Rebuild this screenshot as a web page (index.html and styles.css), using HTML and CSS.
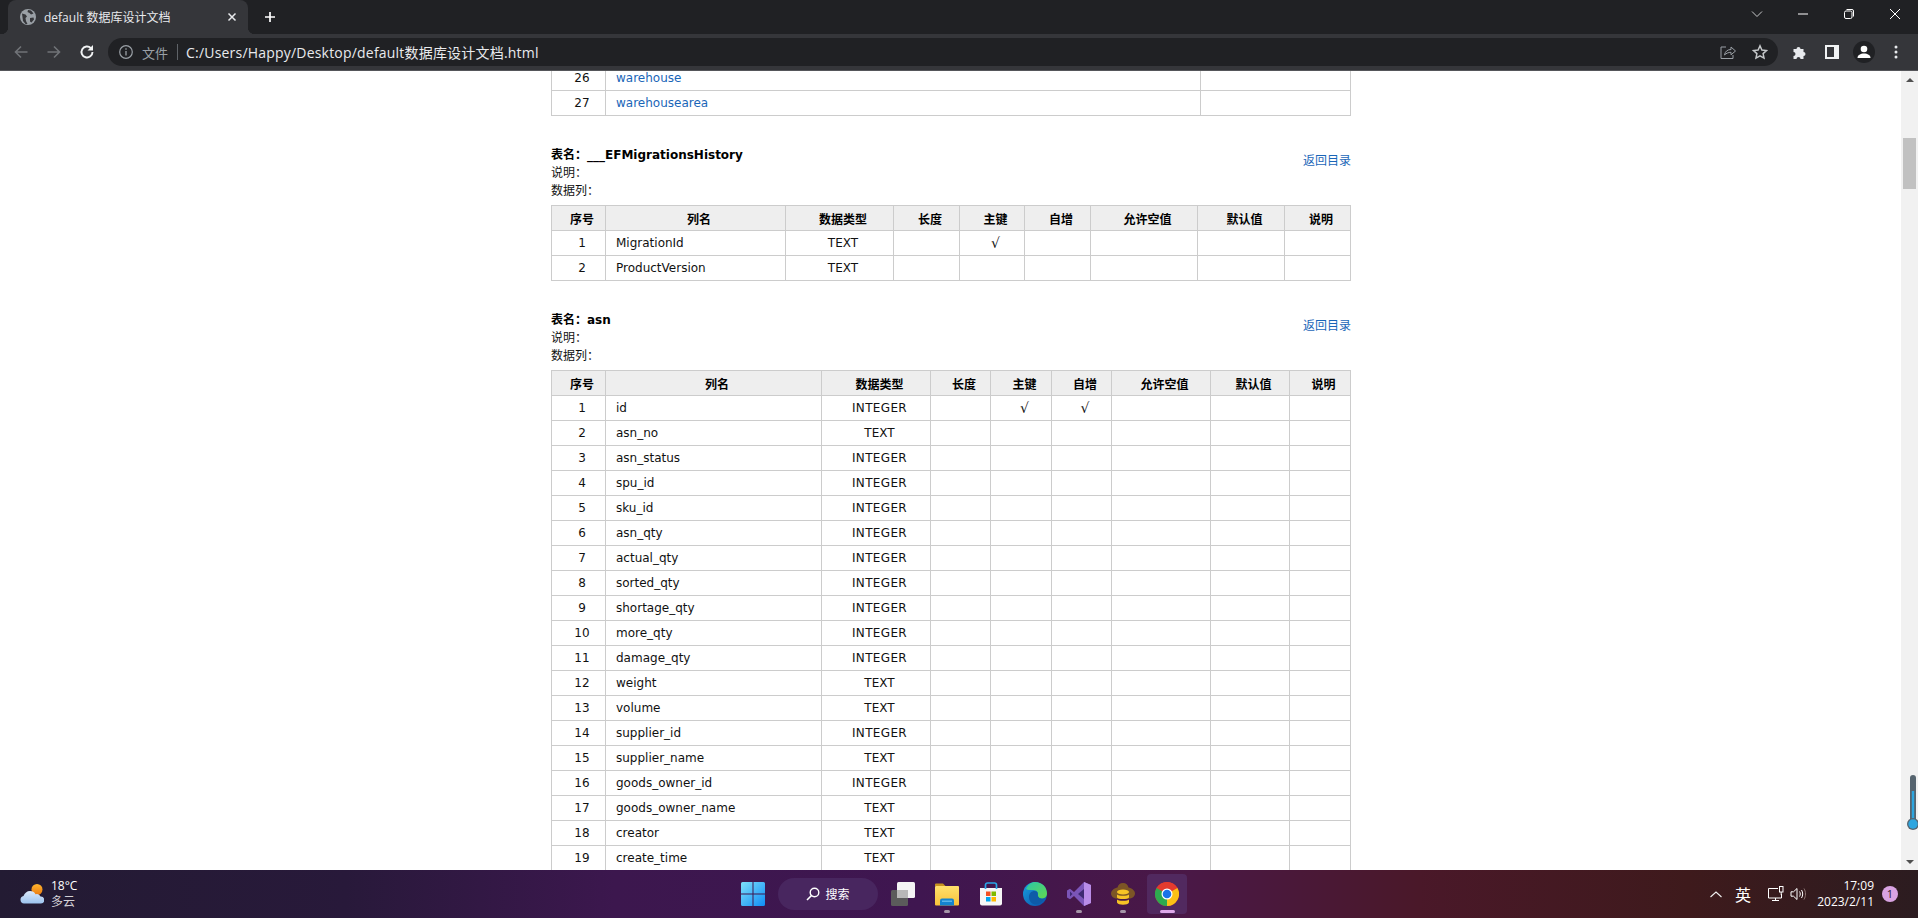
FILE: index.html
```html
<!DOCTYPE html>
<html lang="zh-CN">
<head>
<meta charset="utf-8">
<title>default 数据库设计文档</title>
<link rel="stylesheet" href="styles.css">
</head>
<body>
<header class="chrome">
  <div class="tabstrip">
    <div class="tab">
      <svg class="tab-favicon" viewBox="0 0 16 16"><circle cx="8" cy="8" r="8" fill="#9aa0a6"/><path d="M2 4.500l3.500 1 1.500 2-1.500 1.500.5 3 1.500 3-2 0-2.500-3zM8 1l3 .5 2.500 3-2.500 1-1.500-1.500-2-1zM10 9l3.500-.5.500 2-2.500 3-1.500-1z" fill="#35363a"/></svg>
      <span class="tab-title">default 数据库设计文档</span>
      <svg class="tab-close" viewBox="0 0 10 10"><path d="M1.500 1.500l7 7M8.500 1.500l-7 7" stroke="#e8eaed" stroke-width="1.500"/></svg>
    </div>
    <svg class="newtab" viewBox="0 0 12 12"><path d="M6 1v10M1 6h10" stroke="#fff" stroke-width="1.700"/></svg>
    <div class="winctl">
      <svg class="winbtn" viewBox="0 0 12 12"><path d="M1 3.500l5 5 5-5" fill="none" stroke="#c8c9cb" stroke-width="1"/></svg>
      <svg class="winbtn" viewBox="0 0 12 12"><path d="M1 6h10" stroke="#fff" stroke-width="1"/></svg>
      <svg class="winbtn" viewBox="0 0 12 12"><rect x="1.500" y="3" width="7.500" height="7.500" rx="1.500" fill="none" stroke="#fff"/><path d="M3.500 1.500h5.500a1.500 1.500 0 0 1 1.500 1.500v5.500" fill="none" stroke="#fff"/></svg>
      <svg class="winbtn" viewBox="0 0 12 12"><path d="M1 1l10 10M11 1L1 11" stroke="#fff" stroke-width="1"/></svg>
    </div>
  </div>
  <div class="toolbar">
    <svg class="navbtn" viewBox="0 0 16 16"><path d="M14.500 8H3M8 2.500L2.500 8 8 13.500" fill="none" stroke="#707377" stroke-width="1.600"/></svg>
    <svg class="navbtn" viewBox="0 0 16 16"><path d="M1.500 8H13M8 2.500L13.500 8 8 13.500" fill="none" stroke="#707377" stroke-width="1.600"/></svg>
    <svg class="navbtn" viewBox="0 0 16 16"><path d="M13.500 8a5.500 5.500 0 1 1-1.600-3.900" fill="none" stroke="#f1f3f4" stroke-width="1.900"/><path d="M14 1v5.500H8.500z" fill="#f1f3f4"/></svg>
    <div class="omnibox">
      <svg class="info" viewBox="0 0 14 14"><circle cx="7" cy="7" r="6.300" fill="none" stroke="#9aa0a6" stroke-width="1.200"/><path d="M7 6v4.500M7 3.300v1.500" stroke="#9aa0a6" stroke-width="1.300"/></svg>
      <span class="scheme">文件</span>
      <span class="omni-sep"></span>
      <span class="url">C:/Users/Happy/Desktop/default数据库设计文档.html</span>
      <svg class="omni-icon share" viewBox="0 0 16 16"><path d="M6 3H1v11.500h12V11" fill="none" stroke="#9aa0a6" stroke-width="1"/><path d="M4.500 11c.5-3.500 3-5.500 6.500-5.500V3l4.500 4-4.500 3.800V8.300c-2.500 0-4.800 1-6.500 2.700z" fill="none" stroke="#9aa0a6" stroke-width="1"/></svg>
      <svg class="omni-icon star" viewBox="0 0 16 16"><path d="M8 1.800l1.900 4.200 4.600.5-3.400 3.100.9 4.500L8 11.800l-4 2.300.9-4.500L1.500 6.500l4.600-.5z" fill="none" stroke="#c4c7c9" stroke-width="1.500"/></svg>
    </div>
    <svg class="tool puzzle" viewBox="0 0 16 16"><path d="M1.500 5h3a2 2 0 1 1 4 0h3v3a2 2 0 1 1 0 4v3h-3a2 2 0 1 0-4 0h-3v-3a2 2 0 1 0 0-4z" fill="#e8eaed"/></svg>
    <svg class="tool panel" viewBox="0 0 14 14"><rect width="14" height="14" fill="#f1f3f4"/><rect x="2" y="2" width="7" height="10" fill="#35363a"/></svg>
    <svg class="tool avatar" viewBox="0 0 22 22"><circle cx="11" cy="11" r="11" fill="#202124"/><circle cx="11" cy="8" r="3.300" fill="#fff"/><path d="M4.500 17c0-3 3-4.500 6.500-4.500s6.500 1.500 6.500 4.500z" fill="#fff"/></svg>
    <svg class="tool dots" viewBox="0 0 4 14"><circle cx="2" cy="2" r="1.500" fill="#e8eaed"/><circle cx="2" cy="7" r="1.500" fill="#e8eaed"/><circle cx="2" cy="12" r="1.500" fill="#e8eaed"/></svg>
  </div>
</header>

<main class="viewport">
  <div class="doc">
    <table class="grid t1">
      <colgroup><col class="w54"><col class="w595"><col class="w150"></colgroup>
      <tbody>
        <tr><td class="c">26</td><td class="l"><a href="#">warehouse</a></td><td></td></tr>
        <tr><td class="c">27</td><td class="l"><a href="#">warehousearea</a></td><td></td></tr>
      </tbody>
    </table>

    <section class="tbl">
      <div class="tbl-head">
        <div class="tbl-meta">
          <div class="tbl-name">表名：___EFMigrationsHistory</div>
          <div>说明：</div>
          <div>数据列：</div>
        </div>
        <a class="back" href="#">返回目录</a>
      </div>
      <table class="grid t2">
        <colgroup><col class="w54"><col class="w180"><col class="w108"><col class="w66"><col class="w65"><col class="w66"><col class="w107"><col class="w87"><col class="w66"></colgroup>
        <thead><tr><th>序号</th><th>列名</th><th>数据类型</th><th>长度</th><th>主键</th><th>自增</th><th>允许空值</th><th>默认值</th><th>说明</th></tr></thead>
        <tbody>
          <tr><td class="c">1</td><td class="l">MigrationId</td><td class="c">TEXT</td><td></td><td class="c k">√</td><td></td><td></td><td></td><td></td></tr>
          <tr><td class="c">2</td><td class="l">ProductVersion</td><td class="c">TEXT</td><td></td><td></td><td></td><td></td><td></td><td></td></tr>
        </tbody>
      </table>
    </section>

    <section class="tbl">
      <div class="tbl-head">
        <div class="tbl-meta">
          <div class="tbl-name">表名：asn</div>
          <div>说明：</div>
          <div>数据列：</div>
        </div>
        <a class="back" href="#">返回目录</a>
      </div>
      <table class="grid t3">
        <colgroup><col class="w54"><col class="w216"><col class="w109"><col class="w60"><col class="w61"><col class="w60"><col class="w99"><col class="w79"><col class="w61"></colgroup>
        <thead><tr><th>序号</th><th>列名</th><th>数据类型</th><th>长度</th><th>主键</th><th>自增</th><th>允许空值</th><th>默认值</th><th>说明</th></tr></thead>
        <tbody>
          <tr><td class="c">1</td><td class="l">id</td><td class="c i">INTEGER</td><td></td><td class="c k">√</td><td class="c k">√</td><td></td><td></td><td></td></tr>
          <tr><td class="c">2</td><td class="l">asn_no</td><td class="c">TEXT</td><td></td><td></td><td></td><td></td><td></td><td></td></tr>
          <tr><td class="c">3</td><td class="l">asn_status</td><td class="c i">INTEGER</td><td></td><td></td><td></td><td></td><td></td><td></td></tr>
          <tr><td class="c">4</td><td class="l">spu_id</td><td class="c i">INTEGER</td><td></td><td></td><td></td><td></td><td></td><td></td></tr>
          <tr><td class="c">5</td><td class="l">sku_id</td><td class="c i">INTEGER</td><td></td><td></td><td></td><td></td><td></td><td></td></tr>
          <tr><td class="c">6</td><td class="l">asn_qty</td><td class="c i">INTEGER</td><td></td><td></td><td></td><td></td><td></td><td></td></tr>
          <tr><td class="c">7</td><td class="l">actual_qty</td><td class="c i">INTEGER</td><td></td><td></td><td></td><td></td><td></td><td></td></tr>
          <tr><td class="c">8</td><td class="l">sorted_qty</td><td class="c i">INTEGER</td><td></td><td></td><td></td><td></td><td></td><td></td></tr>
          <tr><td class="c">9</td><td class="l">shortage_qty</td><td class="c i">INTEGER</td><td></td><td></td><td></td><td></td><td></td><td></td></tr>
          <tr><td class="c">10</td><td class="l">more_qty</td><td class="c i">INTEGER</td><td></td><td></td><td></td><td></td><td></td><td></td></tr>
          <tr><td class="c">11</td><td class="l">damage_qty</td><td class="c i">INTEGER</td><td></td><td></td><td></td><td></td><td></td><td></td></tr>
          <tr><td class="c">12</td><td class="l">weight</td><td class="c">TEXT</td><td></td><td></td><td></td><td></td><td></td><td></td></tr>
          <tr><td class="c">13</td><td class="l">volume</td><td class="c">TEXT</td><td></td><td></td><td></td><td></td><td></td><td></td></tr>
          <tr><td class="c">14</td><td class="l">supplier_id</td><td class="c i">INTEGER</td><td></td><td></td><td></td><td></td><td></td><td></td></tr>
          <tr><td class="c">15</td><td class="l">supplier_name</td><td class="c">TEXT</td><td></td><td></td><td></td><td></td><td></td><td></td></tr>
          <tr><td class="c">16</td><td class="l">goods_owner_id</td><td class="c i">INTEGER</td><td></td><td></td><td></td><td></td><td></td><td></td></tr>
          <tr><td class="c">17</td><td class="l">goods_owner_name</td><td class="c">TEXT</td><td></td><td></td><td></td><td></td><td></td><td></td></tr>
          <tr><td class="c">18</td><td class="l">creator</td><td class="c">TEXT</td><td></td><td></td><td></td><td></td><td></td><td></td></tr>
          <tr><td class="c">19</td><td class="l">create_time</td><td class="c">TEXT</td><td></td><td></td><td></td><td></td><td></td><td></td></tr>
        </tbody>
      </table>
    </section>
  </div>

  <aside class="scrollbar">
    <span class="arrow up"></span>
    <span class="thumb"></span>
    <span class="arrow down"></span>
    <svg class="thermo" viewBox="0 0 14 56"><rect x="4" y="0" width="6" height="48" rx="3" fill="#56646f"/><rect x="5.800" y="16" width="2.400" height="32" fill="#2ea6e0"/><circle cx="7" cy="49" r="6" fill="#56646f"/><circle cx="7" cy="49" r="4.700" fill="#2ea6e0"/></svg>
  </aside>
</main>

<footer class="taskbar">
  <div class="weather">
    <svg class="weather-icon" viewBox="0 0 24 20"><defs><linearGradient id="sun" x1="0" y1="0" x2="0" y2="1"><stop offset="0" stop-color="#ffb52e"/><stop offset="1" stop-color="#ea7a10"/></linearGradient><linearGradient id="cloud" x1="0" y1="0" x2="0" y2="1"><stop offset="0" stop-color="#dce9fa"/><stop offset="1" stop-color="#9cc3ee"/></linearGradient></defs><circle cx="17" cy="5.500" r="5.500" fill="url(#sun)"/><path d="M4 19.500a3.800 3.800 0 0 1-.5-7.500c1-3 3.500-5 6.500-5 2.500 0 4.500 1.200 5.500 3.200a4 4 0 0 1 5 2.300 3.500 3.500 0 0 1 .5 7z" fill="url(#cloud)"/></svg>
    <div class="weather-text">
      <div class="temp">18°C</div>
      <div class="cond">多云</div>
    </div>
  </div>
  <div class="apps">
    <svg class="start" viewBox="0 0 24 24"><defs><linearGradient id="win" x1="0" y1="0" x2="1" y2="1"><stop offset="0" stop-color="#7ee0fa"/><stop offset="1" stop-color="#0f8cf5"/></linearGradient></defs><path d="M0 1.500A1.500 1.500 0 0 1 1.500 0H11.500V11.500H0zM12.500 0H22.500A1.500 1.500 0 0 1 24 1.500V11.500H12.500zM0 12.500H11.500V24H1.500A1.500 1.500 0 0 1 0 22.500zM12.500 12.500H24V22.500A1.500 1.500 0 0 1 22.500 24H12.500z" fill="url(#win)"/></svg>
    <div class="search">
      <svg class="search-icon" viewBox="0 0 14 14"><circle cx="8.500" cy="5.500" r="4.300" fill="none" stroke="#fff" stroke-width="1.400"/><path d="M5.500 8.500L1 13" stroke="#fff" stroke-width="1.600"/></svg>
      <span>搜索</span>
    </div>
    <div class="app">
      <svg class="app-icon" viewBox="0 0 24 24"><rect x="0" y="8" width="17" height="16" rx="1.500" fill="#5b5b5b"/><rect x="6" y="0" width="18" height="16" rx="1.500" fill="#f4f4f4"/><rect x="6" y="8" width="11" height="8" fill="#b8b8b8"/></svg>
    </div>
    <div class="app open">
      <svg class="app-icon" viewBox="0 0 24 24"><defs><linearGradient id="fold" x1="0" y1="0" x2="0" y2="1"><stop offset="0" stop-color="#ffe06c"/><stop offset="1" stop-color="#f9c23a"/></linearGradient></defs><path d="M0 2.500A1 1 0 0 1 1 1.500h7l2.500 2.500H0z" fill="#c7931f"/><rect x="0" y="4" width="24" height="19.500" rx="1" fill="url(#fold)"/><path d="M5 23.500v-5a2 2 0 0 1 2-2h10a2 2 0 0 1 2 2v5z" fill="#1484cf"/><rect x="7" y="18.500" width="10" height="1.500" fill="#5ab4ea"/></svg>
    </div>
    <div class="app">
      <svg class="app-icon" viewBox="0 0 24 24"><path d="M1 6h22v15.500a2 2 0 0 1-2 2H3a2 2 0 0 1-2-2z" fill="#f6f6f6"/><path d="M6.500 7V3a2 2 0 0 1 2-2h7a2 2 0 0 1 2 2v4" fill="none" stroke="#29a7e8" stroke-width="1.700"/><rect x="7" y="9.500" width="4.500" height="4.500" fill="#f25022"/><rect x="12.500" y="9.500" width="4.500" height="4.500" fill="#7fba00"/><rect x="7" y="15" width="4.500" height="4.500" fill="#00a4ef"/><rect x="12.500" y="15" width="4.500" height="4.500" fill="#ffb900"/></svg>
    </div>
    <div class="app">
      <svg class="app-icon" viewBox="0 0 24 24"><defs><linearGradient id="edge1" x1="0" y1="0" x2="1" y2="1"><stop offset="0" stop-color="#2cc5a8"/><stop offset="1" stop-color="#62d84e"/></linearGradient><linearGradient id="edge2" x1="0" y1="0" x2="1" y2="1"><stop offset="0" stop-color="#18a0e0"/><stop offset="1" stop-color="#0b4fa8"/></linearGradient></defs><circle cx="12" cy="12" r="12" fill="url(#edge2)"/><path d="M3 7C5 2.500 8.500 0 12 0c7 0 12 5 12 11.500 0 3.500-3 5.500-6 5-2.500-.5-3.500-2-3-3.500.5-1.800-1-5-5-5-3.500 0-6 0-7-1z" fill="url(#edge1)"/><path d="M6 15c0-4 2.800-6 5.500-6 2.200 0 3.500 1.300 3.200 3-.3 2 1 4.500 4 4.800 1 .1 2-.1 2.500-.5-1.500 3.800-5 6.200-8.700 6.200C8.500 22 6 19 6 15z" fill="#0e5ba8"/></svg>
    </div>
    <div class="app open">
      <svg class="app-icon" viewBox="0 0 24 24"><path d="M17 0l7 3v18l-7 3-10-10-4 3.200L0 15.500v-7L3 6.800 7 10z" fill="#7b55b8"/><path d="M17 0l7 3v18l-7 3z" fill="#b98ce8"/><path d="M17 7l-6 5 6 5z" fill="#3e2a72"/><path d="M3 9.500v5l2.500-2.500z" fill="#3e2a72"/></svg>
    </div>
    <div class="app open">
      <svg class="app-icon" viewBox="0 0 24 24"><path d="M12 1c3 0 5 2 5.500 4.500C20.500 6 24 8.500 24 11.500S21 16.500 18 16.500H6c-3 0-6-2-6-5s3.500-5.500 6.500-6C7 3 9 1 12 1z" fill="#7c5526"/><ellipse cx="12" cy="10" rx="6" ry="2.500" fill="#f7c325"/><path d="M6 12.500c1 1.800 11 1.800 12 0v3c-1 2-11 2-12 0z" fill="#f7c325"/><path d="M6 17.500c1 1.800 11 1.800 12 0v3c-1 3-11 3-12 0z" fill="#f7c325"/></svg>
    </div>
    <div class="app active">
      <svg class="app-icon" viewBox="0 0 24 24"><circle cx="12" cy="12" r="12" fill="#e33b2e"/><path d="M12 12L22.400 6A12 12 0 0 1 12 24z" fill="#fbc116"/><path d="M12 12L12 24A12 12 0 0 1 1.600 6z" fill="#2da94f"/><path d="M1.600 6A12 12 0 0 1 12 0 12 12 0 0 1 22.400 6H12z" fill="#e33b2e"/><circle cx="12" cy="12" r="5.500" fill="#fff"/><circle cx="12" cy="12" r="4.300" fill="#1a73e8"/></svg>
    </div>
  </div>
  <div class="tray">
    <svg class="tray-chev" viewBox="0 0 12 7"><path d="M.5 6L6 1l5.500 5" fill="none" stroke="#f0f0f0" stroke-width="1.100"/></svg>
    <span class="ime">英</span>
    <svg class="tray-net" viewBox="0 0 16 16"><path d="M10 2.500H.5V12h13V8" fill="none" stroke="#fff"/><path d="M4 14.500h7M7.500 12v2.500" stroke="#fff"/><rect x="11.500" y="0.500" width="3.500" height="5.500" fill="none" stroke="#fff"/><path d="M13.200 6v3" stroke="#fff"/></svg>
    <svg class="tray-vol" viewBox="0 0 18 14"><path d="M1 4.800h2.500L7 1.500v11L3.500 9.200H1z" fill="none" stroke="#fff"/><path d="M9.500 4.500c1 1.500 1 3.500 0 5M11.500 3c1.600 2.500 1.600 5.500 0 8" fill="none" stroke="#fff"/><path d="M14 1.500c2 3.500 2 7.500 0 11" fill="none" stroke="#8d7572"/></svg>
    <div class="clock"><div>17:09</div><div>2023/2/11</div></div>
    <span class="badge">1</span>
  </div>
</footer>
</body>
</html>
```

FILE: styles.css
```css
* { box-sizing: border-box; }
html { margin: 0; width: 1918px; height: 918px; overflow: hidden; }
body {
  margin: 0;
  width: 1918px;
  height: 918px;
  overflow: hidden;
  display: flex;
  flex-direction: column;
  font-family: "DejaVu Sans", "Noto Sans CJK SC", sans-serif;
  font-size: 12px;
  color: #111;
  background: #fff;
}
svg { display: block; flex: none; }

/* browser chrome */
.chrome { flex: none; font-family: "Open Sans", "Noto Sans CJK SC", sans-serif; }
.tabstrip { height: 34px; background: #202124; display: flex; align-items: stretch; }
.tab {
  position: relative;
  width: 240px;
  margin-left: 8px;
  background: #35363a;
  border-radius: 8px 8px 0 0;
  display: flex;
  align-items: center;
  color: #e8eaed;
  padding-left: 12px;
}
.tab::before, .tab::after {
  content: "";
  position: absolute;
  bottom: 0;
  width: 7px;
  height: 7px;
}
.tab::before { left: -7px; background: radial-gradient(circle at 0 0, #202124 7px, #35363a 7.500px); }
.tab::after { right: -7px; background: radial-gradient(circle at 100% 0, #202124 7px, #35363a 7.500px); }
.tab-favicon { width: 16px; height: 16px; }
.tab-title { margin-left: 8px; font-size: 12px; width: 183px; white-space: nowrap; }
.tab-close { width: 10px; height: 10px; }
.newtab { width: 12px; height: 12px; margin: 11px 0 0 16px; }
.winctl { margin-left: auto; display: flex; align-items: center; padding-bottom: 6px; }
.winbtn { width: 12px; height: 12px; margin: 0 17px; }
.toolbar {
  height: 37px;
  background: #35363a;
  border-bottom: 1px solid #55565a;
  display: flex;
  align-items: flex-start;
  padding-left: 13px;
}
.navbtn { width: 16px; height: 16px; margin: 10px 17px 0 0; }
.omnibox {
  width: 1670px;
  height: 28px;
  margin: 4px 0 0 -4px;
  border-radius: 14px;
  background: #202124;
  display: flex;
  align-items: center;
  padding-left: 11px;
}
.info { width: 14px; height: 14px; }
.scheme { margin-left: 9px; color: #9aa0a6; font-size: 13px; }
.omni-sep { width: 1px; height: 16px; background: #5f6368; margin: 0 8px 0 9px; }
.url { color: #e8eaed; font-size: 14px; letter-spacing: .2px; white-space: nowrap; }
.omni-icon { width: 16px; height: 16px; }
.share { margin-left: auto; }
.star { margin: 0 10px 0 16px; }
.tool { margin-top: 11px; }
.puzzle { width: 16px; height: 16px; margin-left: 14px; margin-top: 10px; }
.panel { width: 14px; height: 14px; margin-left: 17px; margin-top: 11px; }
.avatar { width: 22px; height: 22px; margin-left: 14px; margin-top: 7px; }
.dots { width: 4px; height: 14px; margin-left: 19px; margin-top: 11px; }

/* page */
.viewport { flex: 1; min-height: 0; display: flex; overflow: hidden; }
.doc { flex: 1; padding-left: 551px; margin-top: -6px; }
.grid {
  width: 800px;
  table-layout: fixed;
  border-collapse: collapse;
}
.grid th, .grid td {
  height: 25px;
  padding: 0;
  border: 1px solid #ccc;
  font-size: 12px;
  vertical-align: middle;
}
.grid th { background: #eee; font-weight: 700; text-align: center; color: #000; padding-left: 7px; }
.grid .c { text-align: center; padding-left: 7px; }
.grid .l { padding-left: 10px; }
.grid .i { letter-spacing: .35px; }
.grid .k { font-size: 14px; }
.grid a { color: #1a66b8; text-decoration: none; }
.w54 { width: 54px; } .w60 { width: 60px; } .w61 { width: 61px; }
.w65 { width: 65px; } .w66 { width: 66px; } .w79 { width: 79px; }
.w87 { width: 87px; } .w99 { width: 99px; } .w107 { width: 107px; }
.w108 { width: 108px; } .w109 { width: 109px; } .w150 { width: 150px; }
.w180 { width: 180px; } .w216 { width: 216px; } .w595 { width: 595px; }

.tbl { width: 800px; margin-top: 30px; }
.tbl-head { display: flex; justify-content: space-between; align-items: flex-start; margin-bottom: 5px; }
.tbl-meta { line-height: 18px; }
.tbl-name { font-weight: 700; color: #000; }
.back { color: #1a66b8; text-decoration: none; margin-top: 6px; line-height: 18px; }

/* scrollbar */
.scrollbar {
  position: relative;
  width: 17px;
  flex: none;
  background: #f1f1f1;
  display: flex;
  flex-direction: column;
  align-items: center;
  justify-content: space-between;
  padding: 7px 0 6px;
}
.arrow { width: 0; height: 0; border-left: 4px solid transparent; border-right: 4px solid transparent; }
.arrow.up { border-bottom: 4px solid #505050; }
.arrow.down { border-top: 4px solid #505050; }
.thumb { position: absolute; left: 2px; top: 67px; width: 13px; height: 51px; background: #c1c1c1; }
.thermo { position: absolute; left: 5px; top: 704px; width: 14px; height: 56px; }

/* taskbar */
.taskbar {
  flex: none;
  height: 48px;
  background: linear-gradient(90deg, #231b33 0%, #28193a 18%, #3c174e 32%, #3f1650 48%, #4a1846 62%, #4a1829 74%, #3e1a1c 88%, #2c1c20 100%);
  display: grid;
  grid-template-columns: 732px 1fr auto;
  align-items: center;
  font-family: "Open Sans", "Noto Sans CJK SC", sans-serif;
  color: #fff;
}
.weather { display: flex; align-items: center; padding-left: 20px; }
.weather-icon { width: 24px; height: 20px; }
.weather-text { margin-left: 7px; font-size: 12px; line-height: 16px; }
.cond { color: #d4d0d6; }
.apps { display: flex; align-items: center; }
.start { width: 24px; height: 24px; margin: 0 13px 0 9px; }
.search {
  width: 100px;
  height: 32px;
  border-radius: 16px;
  background: #48265f;
  display: flex;
  align-items: center;
  justify-content: center;
  gap: 5px;
  font-size: 12px;
  margin-right: 5px;
}
.search-icon { width: 14px; height: 14px; }
.app {
  position: relative;
  width: 40px;
  height: 40px;
  margin-right: 4px;
  border-radius: 4px;
  display: flex;
  align-items: center;
  justify-content: center;
}
.app-icon { width: 24px; height: 24px; }
.app.open::after, .app.active::after {
  content: "";
  position: absolute;
  left: 50%;
  bottom: 1px;
  width: 6px;
  height: 3px;
  margin-left: -3px;
  border-radius: 2px;
  background: #a596a8;
}
.app.active { background: #51295f; }
.app.active::after { width: 15px; margin-left: -7px; background: #dfa8ea; }
.tray { display: flex; align-items: center; }
.tray-chev { width: 12px; height: 7px; }
.ime { margin-left: 13px; font-size: 16px; width: 16px; }
.tray-net { width: 16px; height: 16px; margin-left: 17px; }
.tray-vol { width: 18px; height: 14px; margin-left: 6px; }
.clock { margin-left: 6px; width: 60px; text-align: right; font-size: 12px; line-height: 16px; white-space: nowrap; }
.badge {
  width: 16px;
  height: 16px;
  margin: 0 20px 0 8px;
  border-radius: 50%;
  background: #d9a3e2;
  color: #2a1a2a;
  text-align: center;
  font-size: 11px;
  line-height: 16px;
}
```
